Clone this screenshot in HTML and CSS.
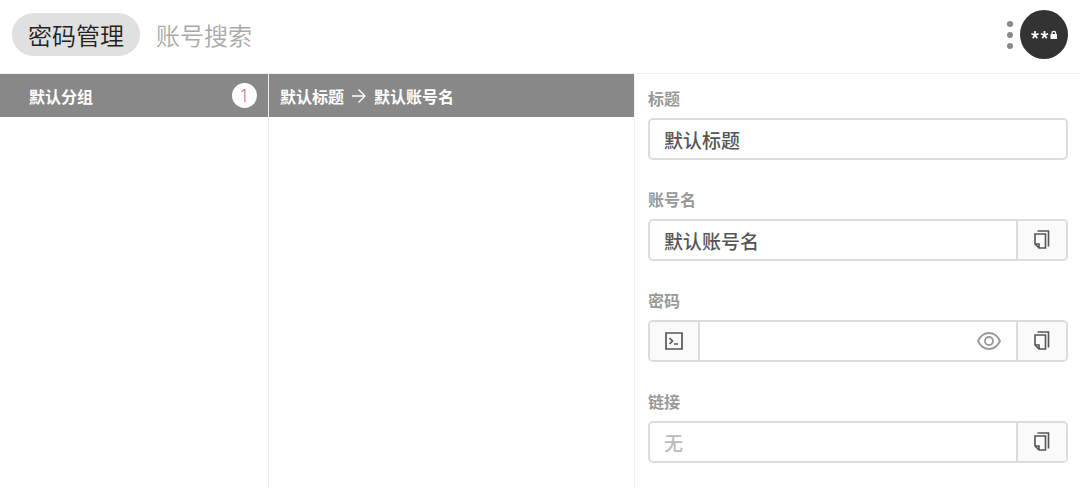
FILE: index.html
```html
<!DOCTYPE html>
<html lang="zh-CN">
<head>
<meta charset="utf-8">
<meta name="viewport" content="width=device-width, initial-scale=1">
<title>密码管理</title>
<link rel="stylesheet" href="styles.css">
</head>
<body>
<svg class="sprite" aria-hidden="true">
  <symbol id="copy" viewBox="0 0 18 20">
    <path d="M2 4h10.500v14H6l-4-4zM2 14h4v4" fill="none" stroke="currentColor" stroke-width="1.600"/>
    <path d="M4.500 1H15.500v15.500" fill="none" stroke="currentColor" stroke-width="1.600"/>
  </symbol>
</svg>
<header class="topbar">
  <nav class="tabs">
    <button class="tab tab-active" type="button">密码管理</button>
    <button class="tab" type="button">账号搜索</button>
  </nav>
  <div class="tools">
    <button class="more" type="button" aria-label="更多">
      <svg width="8" height="28" viewBox="0 0 8 28" fill="#888"><circle cx="4" cy="3" r="3"/><circle cx="4" cy="14" r="3"/><circle cx="4" cy="25" r="3"/></svg>
    </button>
    <button class="avatar" type="button" aria-label="账户">
      <svg width="28" height="12" viewBox="0 0 28 12" fill="none" stroke="#fff" stroke-width="1.700">
        <path d="M5 2v4M1.400 4.800 5 6l3.600-1.200M2.800 9.200 5 6l2.200 3.200M14.500 2v4M10.900 4.800l3.600 1.200 3.600-1.200M12.300 9.200 14.500 6l2.200 3.200"/>
        <path d="M22 6V4.200a1.800 1.800 0 0 1 3.600 0V6" stroke-width="1.300"/>
        <rect x="20.500" y="5" width="6.500" height="5" rx=".5" fill="#fff" stroke="none"/>
      </svg>
    </button>
  </div>
</header>
<main class="columns">
  <section class="groups">
    <button class="row group-row" type="button"><span>默认分组</span><span class="count">1</span></button>
  </section>
  <section class="accounts">
    <button class="row account-row" type="button">
      <span>默认标题</span>
      <svg width="14" height="16" viewBox="0 0 14 16" fill="none" stroke="currentColor" stroke-width="1.400"><path d="M0 8h13M6.500 1.500 13 8l-6.500 6.500"/></svg>
      <span>默认账号名</span>
    </button>
  </section>
  <form class="details">
    <div class="field">
      <label for="title">标题</label>
      <div class="box"><input id="title" type="text" value="默认标题"></div>
    </div>
    <div class="field">
      <label for="account">账号名</label>
      <div class="box"><input id="account" type="text" value="默认账号名">
        <button class="addon addon-end" type="button" aria-label="复制账号名"><svg class="copy-icon"><use href="#copy"/></svg></button></div>
    </div>
    <div class="field">
      <label for="password">密码</label>
      <div class="box">
        <button class="addon addon-start" type="button" aria-label="生成密码">
          <svg width="18" height="18" viewBox="0 0 18 18" fill="none" stroke="currentColor" stroke-width="1.700"><path d="M1 1h16v16H1zM4.500 6l3 3-3 3M9 12h4"/></svg>
        </button>
        <input id="password" type="password">
        <button class="reveal" type="button" aria-label="显示密码">
          <svg width="24" height="18" viewBox="0 0 24 18" fill="none" stroke="currentColor" stroke-width="1.800"><path d="M1 9C3.500 3.800 7.500 1 12 1s8.500 2.800 11 8c-2.500 5.200-6.500 8-11 8S3.500 14.200 1 9z"/><circle cx="12" cy="9" r="4"/></svg>
        </button>
        <button class="addon addon-end" type="button" aria-label="复制密码"><svg class="copy-icon"><use href="#copy"/></svg></button></div>
    </div>
    <div class="field">
      <label for="link">链接</label>
      <div class="box"><input id="link" type="text" placeholder="无">
        <button class="addon addon-end" type="button" aria-label="复制链接"><svg class="copy-icon"><use href="#copy"/></svg></button></div>
    </div>
  </form>
</main>
</body>
</html>
```
FILE: styles.css
```css
* { box-sizing: border-box; }
body {
  margin: 0;
  min-height: 100vh;
  display: flex;
  flex-direction: column;
  background: #fff;
  font-family: "Noto Sans CJK SC", sans-serif;
}
button, input { font: inherit; color: inherit; border: 0; margin: 0; padding: 0; background: none; }
button { cursor: pointer; }
svg { display: block; flex: none; }
.sprite { position: absolute; width: 0; height: 0; }
.topbar {
  display: flex;
  justify-content: space-between;
  align-items: center;
  padding: 10px 12px 14px;
  border-bottom: 1px solid #f0f0f0;
}
.tabs, .tools { display: flex; align-items: center; }
.tab {
  padding: 0 16px;
  border-radius: 22px;
  font-size: 24px;
  font-weight: 350;
  line-height: 43px;
  color: #aaa;
}
.tab-active { background: #e0e0e0; color: #222; }
.tools { gap: 6px; }
.avatar {
  display: flex;
  align-items: center;
  justify-content: center;
  width: 48px;
  height: 49px;
  border-radius: 50%;
  background: #333;
}
.columns { flex: 1; display: grid; grid-template-columns: 269fr 365fr 446fr; }
.groups { border-right: 1px solid #f0f0f0; }
.row {
  display: flex;
  align-items: center;
  width: 100%;
  height: 43px;
  background: #888;
  color: #fff;
  font-size: 16px;
  font-weight: 700;
}
.group-row { justify-content: space-between; padding: 0 11px 0 29px; }
.account-row { gap: 8px; padding: 0 11px; }
.count {
  width: 25px;
  border-radius: 50%;
  background: #fff;
  color: #777;
  font-family: "Open Sans", "Noto Sans", sans-serif;
  font-size: 18px;
  font-weight: 300;
  line-height: 25px;
  text-align: center;
}
.details {
  display: flex;
  flex-direction: column;
  gap: 30px;
  padding: 15px 12px 15px 13px;
  border-left: 1px solid #f0f0f0;
}
.field { display: flex; flex-direction: column; gap: 11px; }
.field label { font-size: 16px; font-weight: 700; line-height: 17px; color: #999; }
.field label { line-height: 18px; }
.box {
  display: flex;
  height: 42px;
  border: 2px solid #dcdcdc;
  border-radius: 5px;
  overflow: hidden;
}
.box input { flex: 1; min-width: 0; padding: 0 14px; font-size: 19px; font-weight: 500; color: #555; outline: 0; }
.box input::placeholder { color: #bbb; opacity: 1; }
.addon {
  display: flex;
  align-items: center;
  justify-content: center;
  width: 50px;
  background: #fafafa;
  color: #555;
}
.addon-start { border-right: 2px solid #dcdcdc; }
.addon-end { border-left: 2px solid #dcdcdc; }
.copy-icon { width: 18px; height: 20px; }
.reveal { display: flex; align-items: center; padding: 0 15px; color: #999; }
```
